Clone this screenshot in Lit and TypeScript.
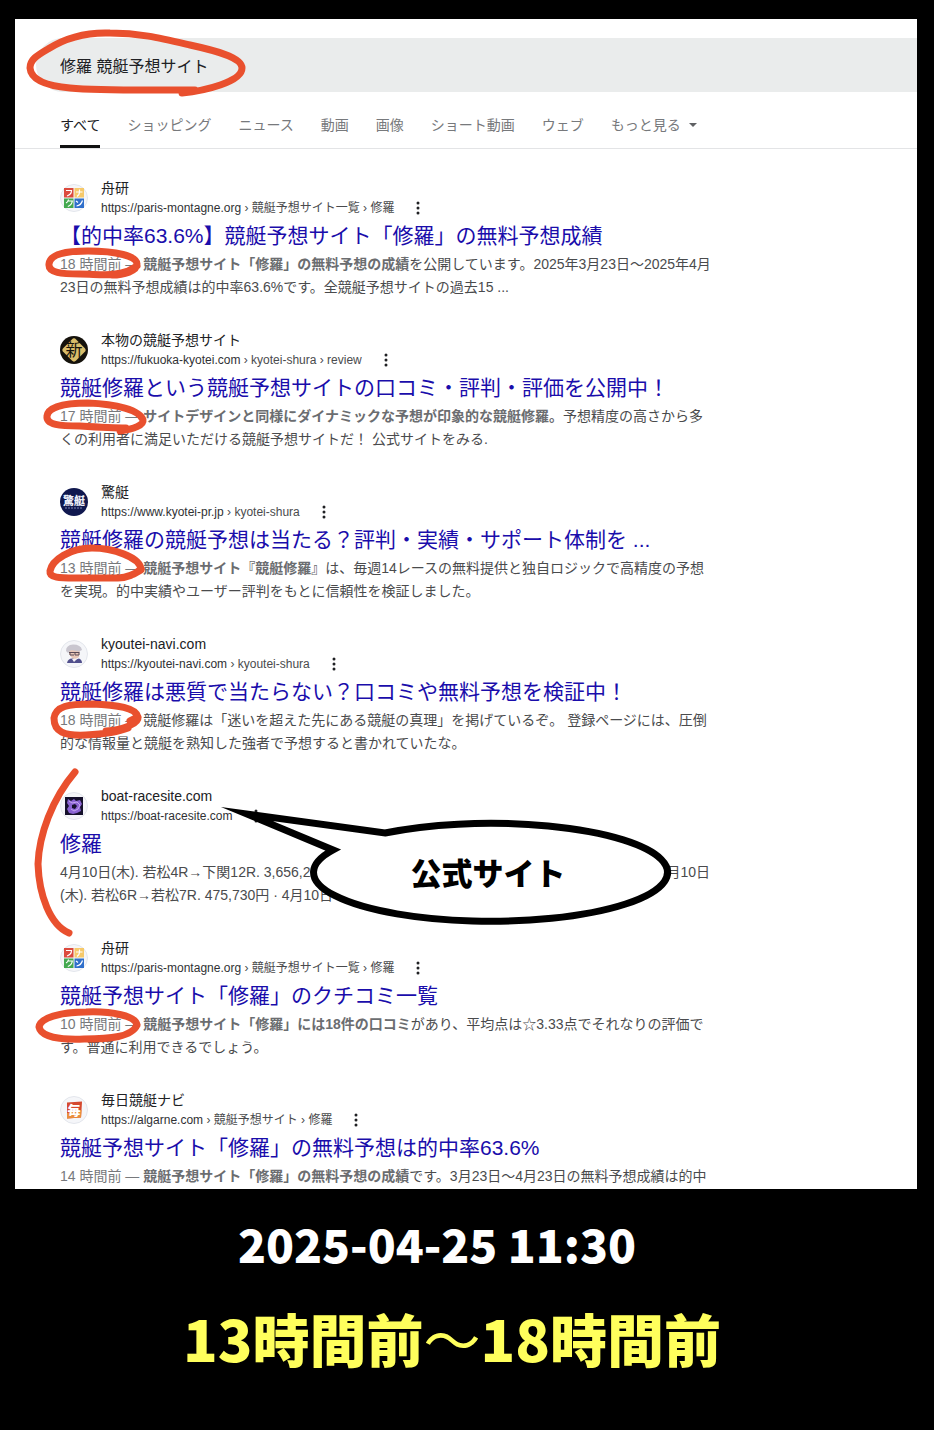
import { LitElement, html, css, svg, nothing } from "lit";
import type { TemplateResult } from "lit";
import { customElement, property } from "lit/decorators.js";

interface Result {
  icon: string;
  name: string;
  host: string;
  path: string;
  title: string;
  age?: string;
  strong?: string;
  text: TemplateResult | string;
}

const TABS = ["すべて", "ショッピング", "ニュース", "動画", "画像", "ショート動画", "ウェブ"];

const RESULTS: Result[] = [
  {
    icon: "funaken",
    name: "舟研",
    host: "https://paris-montagne.org",
    path: " › 競艇予想サイト一覧 › 修羅",
    title: "【的中率63.6%】競艇予想サイト「修羅」の無料予想成績",
    age: "18 時間前",
    strong: "競艇予想サイト「修羅」の無料予想の成績",
    text: html`を公開しています。2025年3月23日～2025年4月<br />23日の無料予想成績は的中率63.6%です。全競艇予想サイトの過去15 ...`,
  },
  {
    icon: "shin",
    name: "本物の競艇予想サイト",
    host: "https://fukuoka-kyotei.com",
    path: " › kyotei-shura › review",
    title: "競艇修羅という競艇予想サイトの口コミ・評判・評価を公開中！",
    age: "17 時間前",
    strong: "サイトデザインと同様にダイナミックな予想が印象的な競艇修羅。",
    text: html`予想精度の高さから多<br />くの利用者に満足いただける競艇予想サイトだ！ 公式サイトをみる.`,
  },
  {
    icon: "kyotei",
    name: "驚艇",
    host: "https://www.kyotei-pr.jp",
    path: " › kyotei-shura",
    title: "競艇修羅の競艇予想は当たる？評判・実績・サポート体制を ...",
    age: "13 時間前",
    strong: "競艇予想サイト『競艇修羅』",
    text: html`は、毎週14レースの無料提供と独自ロジックで高精度の予想<br />を実現。的中実績やユーザー評判をもとに信頼性を検証しました。`,
  },
  {
    icon: "navi",
    name: "kyoutei-navi.com",
    host: "https://kyoutei-navi.com",
    path: " › kyoutei-shura",
    title: "競艇修羅は悪質で当たらない？口コミや無料予想を検証中！",
    age: "18 時間前",
    text: html`競艇修羅は「迷いを超えた先にある競艇の真理」を掲げているぞ。 登録ページには、圧倒<br />的な情報量と競艇を熟知した強者で予想すると書かれていたな。`,
  },
  {
    icon: "boat",
    name: "boat-racesite.com",
    host: "https://boat-racesite.com",
    path: "",
    title: "修羅",
    text: html`4月10日(木). 若松4R→下関12R. 3,656,2<span class="covered"></span>月10日<br />(木). 若松6R→若松7R. 475,730円 · 4月10日`,
  },
  {
    icon: "funaken",
    name: "舟研",
    host: "https://paris-montagne.org",
    path: " › 競艇予想サイト一覧 › 修羅",
    title: "競艇予想サイト「修羅」のクチコミ一覧",
    age: "10 時間前",
    strong: "競艇予想サイト「修羅」には18件の口コミ",
    text: html`があり、平均点は☆3.33点でそれなりの評価で<br />す。普通に利用できるでしょう。`,
  },
  {
    icon: "mai",
    name: "毎日競艇ナビ",
    host: "https://algarne.com",
    path: " › 競艇予想サイト › 修羅",
    title: "競艇予想サイト「修羅」の無料予想は的中率63.6%",
    age: "14 時間前",
    strong: "競艇予想サイト「修羅」の無料予想の成績",
    text: "です。3月23日～4月23日の無料予想成績は的中",
  },
];

const ring = svg`<circle cx="14" cy="14" r="13.5" fill="#f5f6f9" stroke="#e3e6ec" />`;

const ICONS: Record<string, TemplateResult> = {
  funaken: svg`${ring}
    <rect x="4" y="4" width="9.500" height="9.500" fill="#dc4a3d" />
    <rect x="14.500" y="4" width="9.500" height="9.500" fill="#f6c96a" />
    <rect x="4" y="14.500" width="9.500" height="9.500" fill="#43a84f" />
    <rect x="14.500" y="14.500" width="9.500" height="9.500" fill="#2f6fcb" />
    <g fill="none" stroke="#fff" stroke-width="1.200">
      <path d="M6 6.500h5.500q0 4-4.500 5.500" />
      <path d="M16 8h6.500M19.500 5.500v3q0 2-2.500 4" />
      <path d="M8.500 15.500q-.5 2.500-2.500 3.500M8.300 17h4q-.5 4-4.500 5.500" />
      <path d="M16 17l2 1.500M16.500 22q4.500-.5 6-5.500" />
    </g>`,
  shin: svg`<circle cx="14" cy="14" r="14" fill="#15120c" />
    <rect x="5" y="5" width="18" height="18" rx="3" fill="#d9bd6a" transform="rotate(45 14 14)" />
    <text class="glyph serif" x="14" y="20" font-size="17" fill="#15120c">新</text>`,
  kyotei: svg`<circle cx="14" cy="14" r="14" fill="#10184f" />
    <text class="glyph heavy" x="14" y="17" font-size="11" fill="#eef0fa">驚艇</text>
    <path d="M5 20h18" stroke="#7f87b5" stroke-width="1" stroke-dasharray="2 1" />`,
  navi: svg`${ring}
    <path d="M7 23q1-5 6-4.500l3 1 3-1q3 1 3 4.500z" fill="#51508c" />
    <path d="M9 9q5-2 11 1l-1 7q-3 3-7 1l-3-4z" fill="#e8c7b8" />
    <path d="M6 11q0-6 7-6.500 8 0 9 5.500l-3 1.500-8-1.500-3 3z" fill="#c9c6cf" />
    <path d="M9 12.500h10M15 12v3h4v-3M10 12v3h4" stroke="#5b4a56" stroke-width="1" fill="none" />
    <path d="M12 19l2 3 3-3z" fill="#f4f1f5" />`,
  boat: svg`${ring}
    <rect x="5" y="5" width="18" height="18" fill="#15102b" />
    <path d="M8 7l3 2 3-2 2 2 4-1 2 4-2 3 1 4-4 2-4 1-4-1-2-4 2-3-2-3z" fill="#8a63d2" />
    <path d="M9 9l3 2 5-1 3 3-2 4-4 2-3-2" fill="none" stroke="#c5a6f2" stroke-width="1" />
    <path d="M12 13l3-1 2 2-2 3-3-1z" fill="#15102b" />`,
  mai: svg`${ring}
    <path d="M7 6.500l15-1-1 16-14 1z" fill="#d5492f" />
    <path d="M7 17l14.500-3-.5 7.500-14 1z" fill="#ea8d3c" />
    <text class="glyph heavy" x="14" y="19" font-size="13" fill="#fff">毎</text>`,
};

@customElement("site-icon")
export class SiteIcon extends LitElement {
  @property() kind = "";

  static styles = css`
    :host {
      display: block;
      flex: none;
      width: 28px;
      height: 28px;
    }
    svg {
      display: block;
    }
    .glyph {
      text-anchor: middle;
      font-family: "Noto Sans CJK JP", sans-serif;
    }
    .heavy {
      font-weight: 900;
    }
  `;

  render() {
    return html`<svg width="28" height="28" viewBox="0 0 28 28" aria-hidden="true">
      ${ICONS[this.kind]}
    </svg>`;
  }
}

@customElement("search-result")
export class SearchResult extends LitElement {
  @property({ attribute: false }) item!: Result;

  static styles = css`
    :host {
      display: block;
      color: #4a4b4d;
    }
    .head {
      display: flex;
      align-items: center;
      gap: 13px;
      height: 40px;
    }
    .name {
      color: #202124;
      font-size: 14px;
      line-height: 20px;
    }
    .where {
      display: flex;
      align-items: center;
      gap: 18px;
      font-size: 12px;
      line-height: 20px;
      white-space: pre;
    }
    .host {
      color: #303134;
    }
    .more {
      display: flex;
      padding: 0;
      border: 0;
      background: none;
    }
    h3 {
      margin: 0;
      font-size: 21px;
      font-weight: 400;
      line-height: 35px;
      white-space: nowrap;
    }
    a {
      color: #1a0dab;
      text-decoration: none;
    }
    p {
      margin: 0;
      font-size: 14px;
      line-height: 23px;
      white-space: nowrap;
    }
    .covered {
      display: inline-block;
      width: 356px;
    }
    .age {
      color: #77797c;
    }
    strong {
      color: #6b6d70;
      font-weight: 700;
    }
  `;

  render() {
    const r = this.item;
    return html`
      <div class="head">
        <site-icon kind=${r.icon}></site-icon>
        <div>
          <div class="name">${r.name}</div>
          <div class="where">
            <span><span class="host">${r.host}</span>${r.path}</span>
            <button class="more" aria-label="この検索結果について">
              <svg width="12" height="16" viewBox="0 0 12 16" fill="#202124">
                <circle cx="6" cy="3" r="1.500" />
                <circle cx="6" cy="8" r="1.500" />
                <circle cx="6" cy="13" r="1.500" />
              </svg>
            </button>
          </div>
        </div>
      </div>
      <h3><a href="#">${r.title}</a></h3>
      <p>
        ${r.age ? html`<span class="age">${r.age} — </span>` : nothing}${r.strong
          ? html`<strong>${r.strong}</strong>`
          : nothing}${r.text}
      </p>
    `;
  }
}

@customElement("app-root")
export class AppRoot extends LitElement {
  static styles = css`
    :host {
      display: block;
      box-sizing: border-box;
      min-height: 100vh;
      padding: 19px 17px 48px 15px;
      background: #000;
      font-family: "Liberation Sans", "Noto Sans CJK JP", sans-serif;
      text-spacing-trim: space-all;
    }
    .panel {
      position: relative;
      overflow: hidden;
      padding: 19px 0 1px;
      background: #fff;
    }
    .query {
      display: block;
      box-sizing: border-box;
      width: calc(100% - 21px);
      height: 54px;
      margin: 0 0 0 21px;
      padding: 0 24px;
      border: 0;
      border-radius: 27px 0 0 27px;
      background: #eaecec;
      color: #202124;
      font: inherit;
      font-size: 16px;
    }
    .tabs {
      display: flex;
      gap: 27px;
      height: 56px;
      padding: 0 45px;
      border-bottom: 1px solid #e3e4e6;
      font-size: 14px;
      line-height: 66px;
      white-space: nowrap;
    }
    .tab {
      box-sizing: border-box;
      height: 56px;
      padding: 0;
      border: 0;
      background: none;
      color: #77797c;
      font: inherit;
      text-decoration: none;
    }
    .current {
      border-bottom: 3px solid #111;
      color: #202124;
    }
    .menu {
      display: flex;
      align-items: center;
      gap: 8px;
      height: 66px;
    }
    .results {
      display: grid;
      gap: 31px;
      padding: 29px 45px 0;
    }
    .marks {
      position: absolute;
      top: 0;
      left: 0;
      pointer-events: none;
    }
    .pen {
      fill: none;
      stroke: #e9502e;
      stroke-width: 7;
      stroke-linecap: round;
      stroke-linejoin: round;
    }
    .bubble {
      fill: #fff;
      stroke: #000;
      stroke-width: 7;
      stroke-miterlimit: 20;
    }
    .say {
      font-family: "Noto Sans CJK JP", sans-serif;
      font-size: 31px;
      font-weight: 900;
      text-anchor: middle;
    }
    .caption {
      padding: 17px 58px 0 0;
      font-family: "Noto Sans CJK JP", sans-serif;
      font-weight: 900;
      text-align: center;
      white-space: nowrap;
    }
    .stamp {
      margin: 0;
      color: #fff;
      font-size: 46px;
      line-height: 74px;
    }
    .range {
      margin: 0;
      padding: 12px 0 0 30px;
      color: #ffff5c;
      font-size: 57px;
      line-height: 90px;
    }
    .wave {
      font-weight: 400;
    }
  `;

  render() {
    return html`
      <main class="panel">
        <input class="query" type="search" aria-label="検索" value="修羅 競艇予想サイト" />
        <nav class="tabs">
          ${TABS.map((t, i) => html`<a class=${i === 0 ? "tab current" : "tab"} href="#">${t}</a>`)}
          <button class="tab menu">
            もっと見る
            <svg width="8" height="4" viewBox="0 0 8 4"><path d="M0 0h8L4 4z" fill="#5f6164" /></svg>
          </button>
        </nav>
        <div class="results">
          ${RESULTS.map((r) => html`<search-result .item=${r}></search-result>`)}
        </div>
        <svg class="marks" width="902" height="1170" viewBox="15 19 902 1170">
          <g class="pen">
            <path d="M182 93C204 91 242 82 242 68C242 57 213 50 190 45C160 38 140 33 110 33C82 32 62 40 48 49C36 56 30 60 30 68C31 80 48 86 70 88C100 91 150 90 195 90" />
            <path d="M112 275C124 275 137 271 137 264C137 256 116 251 88 251C66 251 50 254 49 264C48 273 62 274 80 274C98 274 112 277 128 271L137 266" />
            <path d="M120 431C134 429 144 425 143 420C140 410 116 404 88 403C62 403 48 408 47 416C46 425 60 426 80 426C96 427 112 428 126 428" />
            <path d="M134 574L141 570C141 557 112 548 92 548C70 548 52 560 50 571C49 578 60 578 75 578L118 578C126 578 136 574 141 569" />
            <path d="M106 731C124 730 139 723 138 717C136 708 118 705 92 704C68 704 56 706 54 718C54 732 64 736 86 735C104 734 118 732 128 728M130 721L138 717" />
            <path d="M75 772C52 799 39 835 38 864C39 895 50 925 69 933" />
            <path d="M137 1025C136 1016 112 1011 86 1012C60 1012 40 1018 39 1027C41 1037 60 1040 84 1039C110 1039 132 1037 137 1025" />
          </g>
          <path class="bubble" d="M385 833A177 49 0 1 1 333 850L247 814Z" />
          <text class="say" x="488" y="885">公式サイト</text>
        </svg>
      </main>
      <section class="caption">
        <p class="stamp">2025-04-25 11:30</p>
        <p class="range">13時間前<span class="wave">〜</span>18時間前</p>
      </section>
    `;
  }
}
